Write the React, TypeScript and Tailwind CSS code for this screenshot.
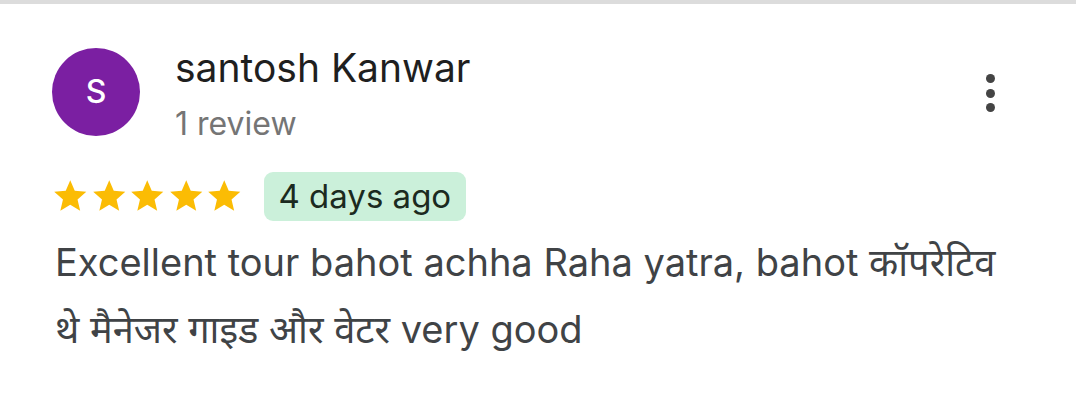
import React from "react";

const Star = () => (
  <svg width="38.5" height="38.5" viewBox="0 0 24 24" className="block">
    <path
      d="M12 17.27L18.18 21l-1.64-7.03L22 9.24l-7.19-.61L12 2 9.19 8.63 2 9.24l5.46 4.73L5.82 21z"
      fill="#fbbc04"
    />
  </svg>
);

export default function App() {
  return (
    <div
      className="w-[1076px] h-[400px] bg-white border-t-[4px] border-[#dcdcdc] overflow-hidden"
      style={{ fontFamily: "Inter, 'Noto Sans', sans-serif" }}
    >
      <div className="pl-[52px] pt-[44px] flex">
        <div className="w-[88px] h-[88px] rounded-full bg-[#7b1fa2] flex items-center justify-center text-white text-[32px] font-medium">
          S
        </div>
        <div className="ml-[35px] flex flex-col">
          <div className="text-[39px] leading-[40px] text-[#1f1f1f]">santosh Kanwar</div>
          <div className="text-[32px] leading-[36px] text-[#757575] mt-[18px]">1 review</div>
        </div>
        <div className="ml-auto mr-[81px] mt-[26px] flex flex-col gap-[5.5px]">
          <div className="w-[9px] h-[9px] rounded-full bg-[#444]" />
          <div className="w-[9px] h-[9px] rounded-full bg-[#444]" />
          <div className="w-[9px] h-[9px] rounded-full bg-[#444]" />
        </div>
      </div>
      <div className="pl-[51px] mt-[30px] flex items-center">
        <div className="flex">
          <Star />
          <Star />
          <Star />
          <Star />
          <Star />
        </div>
        <div className="ml-[20px] h-[49px] px-[15px] rounded-[9px] bg-[#cbf0da] flex items-center text-[33px] text-[#1b2a20]">
          4 days ago
        </div>
      </div>
      <div className="pl-[55px] mt-[8px] text-[38px] leading-[67px] text-[#404346]">
        Excellent tour bahot achha Raha yatra, bahot कॉपरेटिव
        <br />
        थे मैनेजर गाइड और वेटर very good
      </div>
    </div>
  );
}
